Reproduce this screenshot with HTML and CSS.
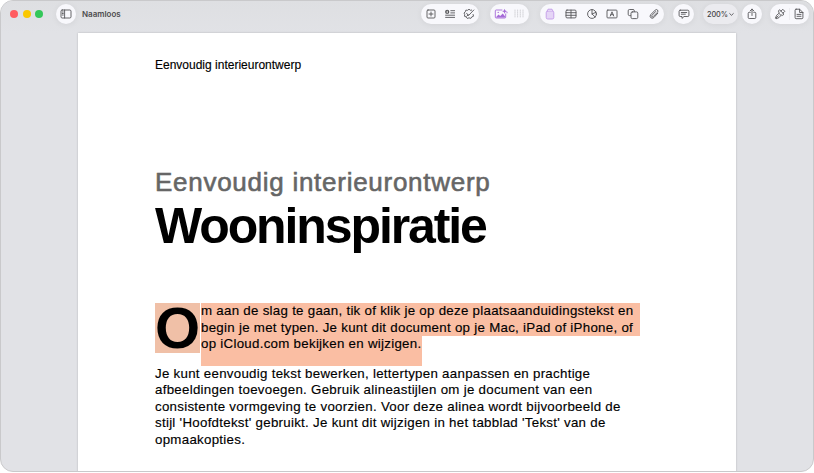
FILE: index.html
```
<!DOCTYPE html>
<html lang="nl">
<head>
    <meta charset="UTF-8">
    <meta name="viewport" content="width=device-width, initial-scale=1.0">
    <link rel="stylesheet" href="styles.css">
    <title>Naamloos</title>
</head>
<body>

<div class="window">
    <header class="toolbar">
        <div class="lights">
            <span class="light red"></span>
            <span class="light yellow"></span>
            <span class="light green"></span>
        </div>
        <div class="pill sidebar-button">
            <svg width="12" height="12" viewBox="0 0 12 12"><rect x="1" y="2" width="10" height="8" rx="1.2"/><path d="M4.6 2v8M2.3 4h1M2.3 5.5h1M2.3 7h1"/></svg>
        </div>
        <span class="title">Naamloos</span>

        <div class="tools">
            <div class="pill group-insert">
                <svg width="12" height="12" viewBox="0 0 12 12"><rect x="2" y="2" width="8" height="8" rx="1"/><path d="M6 4v4M4 6h4"/></svg>
                <svg width="12" height="12" viewBox="0 0 12 12"><circle class="solid" cx="3.2" cy="3.9" r="2.1"/><path class="light-line" d="M3.2 3.2v1.6"/><path d="M6.8 2.7h3.8M6.8 4.9h3.8M1.6 7.2h9M1.6 9.4h9"/></svg>
                <svg width="12" height="12" viewBox="0 0 12 12"><path d="M8.6 2.1 7.4 2.3 6 1.2 4.6 2.3 2.9 2.1 2.3 3.8 1 5 1.7 6.5 1.5 8.3 3.2 8.9 4.4 10.5 6 9.8 7.8 10.4 8.8 8.9 10.5 8.2 10.1 6.5"/><path d="M3.6 5.2 5.5 7.6 10.8 2M3.7 8.2 5.3 6.8"/></svg>
            </div>
            <div class="pill group-image">
                <svg class="purple" width="14" height="12" viewBox="0 0 14 12"><path d="M8 2H2.2Q1.3 2 1.3 2.9v6.2q0 .9.9.9h8.6q.9 0 .9-.9V6"/><path class="solid" d="M2 9.3 4.5 6.4 6.2 8 8.8 5.6 11.3 8.7V9.5H2z"/><circle class="solid" cx="4.2" cy="4.4" r=".7"/><path class="solid" d="m10.6.7.7 1.8 1.8.7-1.8.7-.7 1.8-.7-1.8-1.8-.7 1.8-.7z"/><path d="M13 4.2v.6"/></svg>
                <svg class="faded" width="12" height="12" viewBox="0 0 12 12"><path d="M2 2v8M4.6 2v8M7.3 2v8M10 2v8"/></svg>
            </div>
            <div class="pill group-objects">
                <svg class="lilac" width="12" height="12" viewBox="0 0 12 12"><rect x="2.2" y="3.2" width="7.6" height="7.8" rx="1.5"/><path d="M3 3.2 4 1.2h4l1 2"/></svg>
                <svg width="12" height="12" viewBox="0 0 12 12"><rect x="1" y="2.1" width="10" height="7.8" rx="1"/><path d="M1 4.7h10M1 7.3h10M6 2.1v7.8"/></svg>
                <svg width="12" height="12" viewBox="0 0 12 12"><circle cx="6" cy="6" r="4.4"/><path d="M6 1.6V6l3.2 3M6 6l4-1.7"/></svg>
                <svg width="12" height="12" viewBox="0 0 12 12"><rect x="1" y="2.1" width="10" height="7.8" rx=".8"/><path d="M4.3 8 6 3.8 7.7 8M4.9 6.7h2.2"/></svg>
                <svg width="12" height="12" viewBox="0 0 12 12"><path d="M3.5 7.6h-1Q1.2 7.6 1.2 6.3V2.8q0-1.3 1.3-1.3H6q1.3 0 1.3 1.3v.7"/><rect x="4" y="3.9" width="6.8" height="6.7" rx="1.3"/></svg>
                <svg width="12" height="12" viewBox="0 0 12 12"><path d="M9.8 5.2 5.9 9.5Q4.3 11 2.8 9.7 1.3 8.2 2.7 6.7l4.5-4.6q1.2-1.1 2.3-.1 1 1.1-.1 2.3L5.2 8.6q-.7.6-1.3.1-.6-.7.1-1.4l3.7-3.8"/></svg>
            </div>
            <div class="pill comment-button">
                <svg width="12" height="12" viewBox="0 0 12 12"><path d="M2.2 2.2h7.6q1.1 0 1.1 1.1v4.1q0 1.1-1.1 1.1H6L4 10.4V8.5H2.2Q1.1 8.5 1.1 7.4V3.3q0-1.1 1.1-1.1zM3.3 4.5h5.4M3.3 6.2h4"/></svg>
            </div>
            <div class="pill zoom">200%<svg width="5" height="5" viewBox="0 0 5 5"><path d="m.7 1.6 1.8 1.7 1.8-1.7"/></svg></div>
            <div class="pill share-button">
                <svg width="12" height="12" viewBox="0 0 12 12"><path d="M4.3 4.3H3.2q-1 0-1 1v4.2q0 1 1 1h5.6q1 0 1-1V5.3q0-1-1-1H7.7M6 7.5V1.1M4.2 2.8 6 1.1l1.8 1.7"/></svg>
            </div>
            <div class="pill group-format">
                <svg width="12" height="12" viewBox="0 0 12 12"><path d="M5.8 2 10 6.2 8.7 7.4 7.8 6.9 6.8 7.5 5 9.6 2 10.8 1.4 10.2 2.6 7.3 4.8 5.4 5.1 4.4 4.6 3.4zM7 3.1 8.8 1.3 10.8 3.3 9 5.1M4.9 5.3 6.9 7.3M2.3 9.8l2-2"/></svg>
                <span class="divider"></span>
                <svg width="12" height="12" viewBox="0 0 12 12"><path d="M3.1 1.2h3.5L9.9 4.5v5.2q0 1-1 1H3.1q-1 0-1-1V2.2q0-1 1-1zM6.6 1.2v3.3h3.3M4 6.4h4M4 8.3h4"/></svg>
            </div>
        </div>
    </header>

    <main class="page">
        <p class="running-head">Eenvoudig interieurontwerp</p>
        <h2>Eenvoudig interieurontwerp</h2>
        <h1>Wooninspiratie</h1>

        <div class="intro">
            <span class="dropcap">O</span>
            <div class="selection">
                <p class="full">m aan de slag te gaan, tik of klik je op deze plaatsaanduidingstekst en<br>begin je met typen. Je kunt dit document op je Mac, iPad of iPhone, of</p>
                <p class="last">op iCloud.com bekijken en wijzigen.</p>
            </div>
        </div>

        <p class="body-text">Je kunt eenvoudig tekst bewerken, lettertypen aanpassen en prachtige<br>afbeeldingen toevoegen. Gebruik alineastijlen om je document van een<br>consistente vormgeving te voorzien. Voor deze alinea wordt bijvoorbeeld de<br>stijl 'Hoofdtekst' gebruikt. Je kunt dit wijzigen in het tabblad 'Tekst' van de<br>opmaakopties.</p>
    </main>
</div>

</body>
</html>
```
FILE: styles.css
```
* {
    box-sizing: border-box;
}

body {
    margin: 0;
    background-color: #fff;
    font-family: "Liberation Sans", Arial, sans-serif;
    overflow: hidden;
}

h1, h2, p {
    margin: 0;
    white-space: nowrap;
}

.window {
    width: 814px;
    height: 472px;
    overflow: hidden;
    background-color: #e1e2e6;
    border: 1px solid #c9c9cb;
    border-radius: 13px;
}

.toolbar {
    display: flex;
    align-items: center;
    height: 32px;
    padding: 0 4px 6px 9px;
    background: linear-gradient(#dedfe2, #e1e2e6);
}

.lights {
    display: flex;
    gap: 4.5px;
}

.light {
    width: 8px;
    height: 8px;
    border-radius: 50%;
}

.red {
    background-color: #ff5c60;
}

.yellow {
    background-color: #fac800;
}

.green {
    background-color: #34c759;
}

.pill {
    display: flex;
    align-items: center;
    justify-content: space-between;
    height: 20px;
    border-radius: 10px;
    background-color: #f8f8fc;
    box-shadow: 0 1px 6px rgba(0, 0, 0, 0.06);
}

.sidebar-button {
    width: 20px;
    margin-left: 13px;
    justify-content: center;
}

.title {
    margin-left: 6px;
    font: 600 8px Inter, sans-serif;
    color: #4c4c4e;
}

.tools {
    display: flex;
    margin-left: auto;
}

svg {
    flex: none;
    fill: none;
    stroke: #555558;
    stroke-width: 0.9;
    stroke-linecap: round;
    stroke-linejoin: round;
}

.solid {
    fill: #555558;
    stroke: none;
}

.light-line {
    stroke: #fff;
}

.purple {
    stroke: #a66bd8;
}

.purple .solid {
    fill: #a66bd8;
}

.lilac {
    stroke: #c29be8;
    fill: #e5d5f6;
}

.faded {
    stroke: #d0d0d5;
    stroke-dasharray: 1 1;
}

.group-insert {
    width: 58px;
    padding: 0 4px;
    margin-right: 11px;
}

.group-image {
    width: 39px;
    padding: 0 4px;
    margin-right: 11px;
}

.group-objects {
    width: 124px;
    padding: 0 4px;
    margin-right: 9px;
}

.comment-button {
    width: 21px;
    justify-content: center;
    margin-right: 9px;
}

.zoom {
    width: 35px;
    justify-content: center;
    gap: 1px;
    margin-right: 4px;
    background-color: #ebebef;
    font: 500 7.3px Inter, sans-serif;
    color: #444446;
}

.share-button {
    width: 20px;
    justify-content: center;
    margin-right: 8px;
}

.group-format {
    width: 39px;
    padding: 0 4px;
}

.divider {
    width: 1px;
    height: 12px;
    background-color: #ededf1;
}

.page {
    width: 658px;
    height: 440px;
    margin-left: 77px;
    padding: 25px 77px 0;
    background-color: #fff;
    box-shadow: 0 0 2px rgba(0, 0, 0, 0.2);
    color: #000;
}

.running-head {
    font-size: 12px;
    line-height: 14px;
    -webkit-text-stroke: 0.15px #000;
}

h2 {
    margin-top: 94px;
    font-size: 26px;
    font-weight: normal;
    line-height: 32px;
    letter-spacing: 0.73px;
    color: #666;
    -webkit-text-stroke: 0.6px #666;
}

h1 {
    font-size: 50px;
    line-height: 56px;
    letter-spacing: -2.1px;
}

.intro {
    display: flex;
    align-items: flex-start;
    margin-top: 49px;
}

.dropcap {
    width: 45px;
    height: 50px;
    margin-right: 1px;
    background-color: #f0c0a7;
    font-size: 58px;
    font-weight: bold;
    line-height: 49px;
}

.full, .last, .body-text {
    font-size: 13.3px;
    line-height: 16.6px;
    letter-spacing: 0.28px;
    -webkit-text-stroke: 0.15px #000;
}

.full {
    width: 439px;
    background-color: #fabea3;
}

.last {
    width: 221px;
    height: 29.5px;
    background-color: #fabea3;
}
```
